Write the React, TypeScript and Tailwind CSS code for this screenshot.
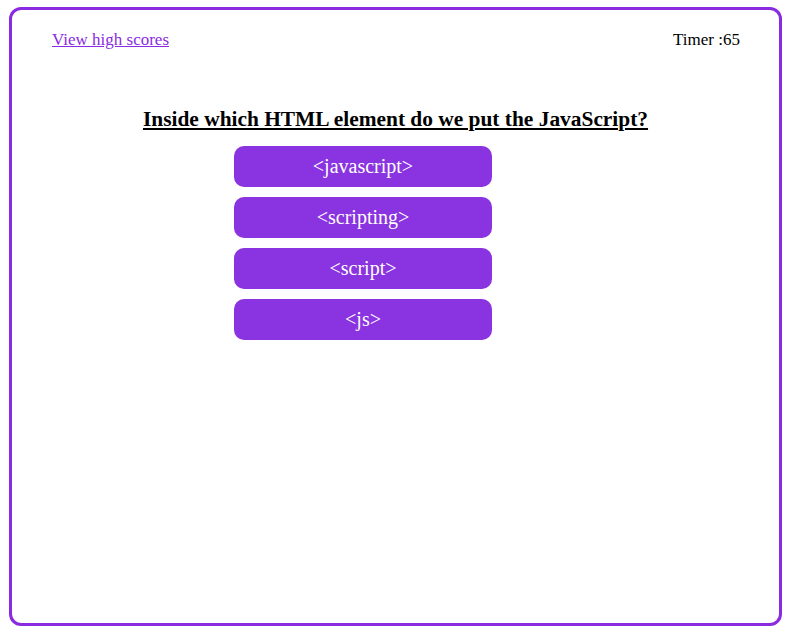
const answers = ['<javascript>', '<scripting>', '<script>', '<js>'];

export default function App() {
  return (
    <div className="w-[796px] h-[634px] bg-white pt-[7px] pl-[9px] font-['Liberation_Serif',serif]">
      <div className="w-[773px] h-[619px] border-[3px] border-[#8a2be2] rounded-[12px] flex flex-col">
        <header className="flex justify-between items-center pl-[40px] pr-[39px] pt-[17px] text-[17px]">
          <a href="#" className="text-[#8a2be2] underline">View high scores</a>
          <span className="text-black">Timer :65</span>
        </header>
        <main className="flex flex-col pt-[53px]">
          <h2 className="text-center font-bold underline text-[21.4px] leading-[26px]">
            Inside which HTML element do we put the JavaScript?
          </h2>
          <div className="flex flex-col gap-[10px] mt-[14px] ml-[222px]">
            {answers.map((a) => (
              <button
                key={a}
                className="w-[258px] h-[41px] rounded-[10px] bg-[#8a33e0] text-white text-[20px]"
              >
                {a}
              </button>
            ))}
          </div>
        </main>
      </div>
    </div>
  );
}
